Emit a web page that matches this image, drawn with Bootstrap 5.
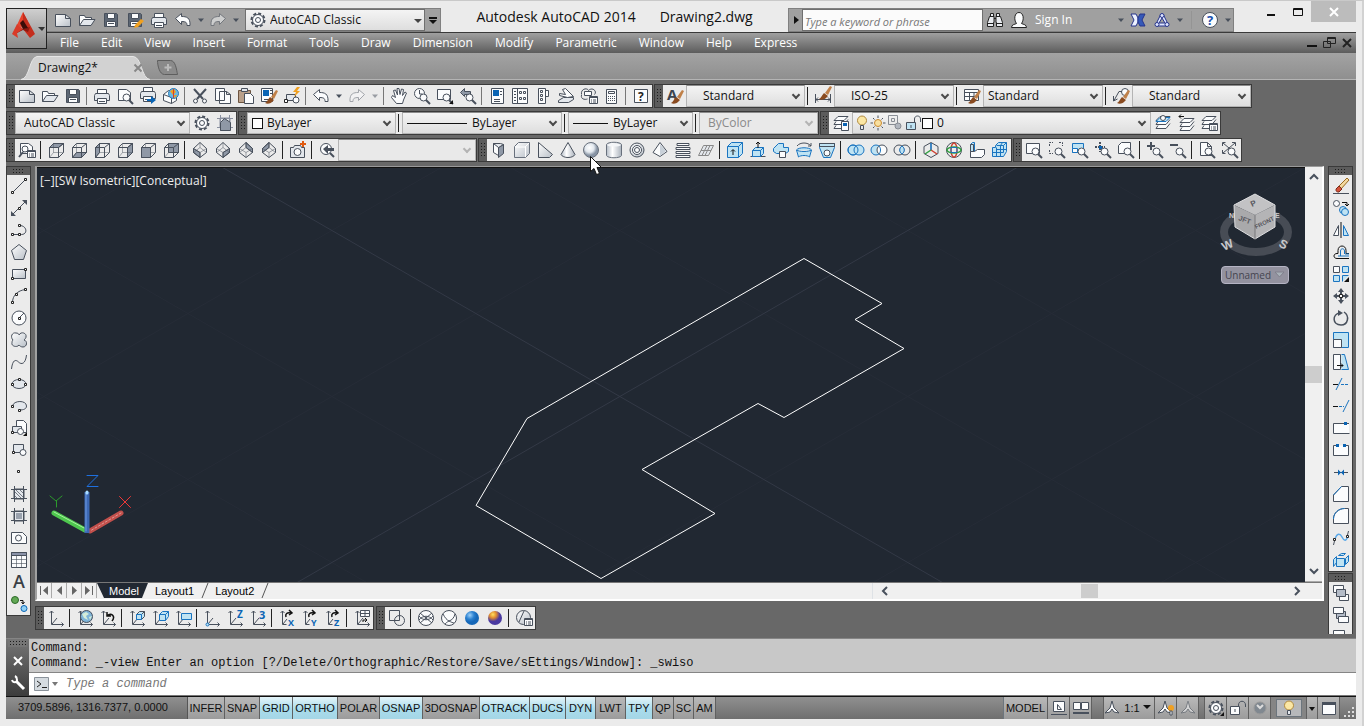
<!DOCTYPE html>
<html lang="en">
<head>
<meta charset="utf-8">
<meta name="viewport" content="width=device-width, initial-scale=1">
<title>Autodesk AutoCAD 2014 - Drawing2.dwg</title>
<link href="https://cdn.jsdelivr.net/npm/bootstrap@5.3.0/dist/css/bootstrap.min.css" rel="stylesheet">
<style>
body{font:12px/16px "Open Sans","Noto Sans",sans-serif;color:#111;background:#ebebeb}
.app{min-height:100vh;border-top:1px solid #c9c9c9;border-bottom:1px solid #c9c9c9;border-right:2px solid #d2d2d2;padding:0 6px 7px 6px}
svg{overflow:visible;display:block;flex:none}
button{font:inherit}
svg.i,.tool svg,.flat svg{width:16px;height:16px;fill:none;stroke:#48505c;stroke-width:1}
.w{fill:#fbfcfd}.l{fill:#e3e7ec}.g{fill:#8f98a6}.c{fill:#bfe3f3}.d{fill:#48505c;stroke:none}.k{fill:#111;stroke:none}.u{fill:#0a64b4;stroke:none}
.b{stroke:#1a74c0}.t{stroke-width:2}.br{fill:#8a4b20;stroke:none}.or{fill:#f0a020;stroke:none}
.n{fill:#fff;stroke:#222}
.da{stroke-dasharray:3 1}

/* title and menu */
.top{position:relative}
.appbtn{position:absolute;left:0;top:7px;width:41px;height:41px;border:1px solid #222;border-radius:0;background:linear-gradient(#cfcfcf,#8a8a8a);padding:0;z-index:2}
.titlebar{height:31px;padding-left:40px;padding-top:7px}
.flat{border:0;background:none;padding:0;border-radius:0;width:24px;height:22px;display:flex;align-items:center;justify-content:center}
.flat.nar{width:11px}
.qat,.info{background:#a0a0a0;border:1px solid #808080;height:24px}
.combo{display:flex;align-items:center;background:linear-gradient(#f4f4f4,#dedede);border:1px solid #b4b4b4;border-top-color:#8c8c8c;position:relative;height:22px}
.combo select{appearance:none;border:0;background:none;width:100%;height:100%;padding:0 18px 0 8px;color:#111;outline:0}
.combo::after{content:"";position:absolute;right:5px;top:6px;width:6px;height:6px;border:solid #4a4a4a;border-width:0 2px 2px 0;transform:rotate(45deg);pointer-events:none}
.combo.off::after{border-color:#b4b4b4}.combo.off,.combo.off select{color:#8a8a8a;background:#e9e9e9;opacity:1}
.combo.tri{border-color:#707070}.combo.tri::after{width:0;height:0;border:4px solid transparent;border-top-color:#444;transform:none;top:9px;right:2px}
.wtitle{font-size:14px;line-height:18px;color:#111}
.info input{width:181px;height:22px;border:1px solid #6f6f6f;border-radius:0;font-size:11px;font-style:italic;padding:2px 2px 0;background:#fbfbfb}
.info input::placeholder,.cmdin input::placeholder{color:#777;opacity:1}
.close{width:45px;height:21px;background:#bcbcbc;border:0;padding:0}
.menubar{height:21px;background:linear-gradient(#3a3a3a 0 1px,#a0a0a0 1px,#5c5c5c);padding-left:43px}
.menubar a{color:#fff;text-decoration:none;padding:0 11px;line-height:21px}
.doctabs{height:27px;background:linear-gradient(#a3a3a3,#8f8f8f);border-bottom:1px solid #b4b4b4;padding-left:15px}
.dtab{position:relative;width:130px;padding:7px 7px 0 17px}
.dtab>*{position:relative}
.dtab>svg.bgs{position:absolute;left:0;top:3px;width:148px;height:23px}

/* toolbars */
.work{background:#686868;padding:4px 3px 4px 0;flex:1}
.tbar{display:flex;background:#ebebeb;border:1px solid #3a3a3a;height:24px;align-items:center}
.grip{width:8px;align-self:stretch;flex:none;background:radial-gradient(circle,#1c1c1c 1px,transparent 1px) 0 0/3px 3px #5c5c5c;border:solid #5c5c5c;border-width:3px 1px}
.tool{width:23px;height:22px;padding:0;border:0;border-radius:0;display:flex;align-items:center;justify-content:center;flex:none;position:relative}
.tool.nar{width:13px}
.sep{width:6px;flex:none;align-self:stretch;background:linear-gradient(#222,#222) 2px 50%/1px 18px no-repeat}
.grey{background-image:linear-gradient(#777,#777)}
.vert{flex-direction:column;height:auto;width:25px}
.vert .grip{width:auto;height:8px;border-width:1px 5px}
.swatch{width:11px;height:11px;border:1px solid #111;background:#fff;flex:none}
.pointer{position:absolute;left:11px;top:17px;z-index:5}

/* drawing area */
.view{border:1px solid #9a9a9a;border-left:2px solid #a0a0a0;border-right:2px solid #fff;border-bottom:2px solid #fff;background:#f0f0f0}
.canvas{background:#212832;position:relative;overflow:hidden;min-height:200px;border-top:1px solid #111}
.plan{position:absolute;width:100%;height:100%}
.vlabel{position:absolute;left:3px;top:5px;color:#eee;z-index:1}
.cubebox{position:absolute;right:11px;top:22px}
.ucsbox{position:absolute;left:8px;bottom:46px}
.wcs{position:absolute;right:16px;top:98px;width:68px;height:18px;border:1px solid #b5b4c4;border-radius:4px;background:#93929f;color:#44444f;padding:0 4px 0 3px;font-size:10px;line-height:15px}
.vs{width:17px;padding:3px 0;border-bottom:1px solid #aaa}
.thumb{background:#cdcdcd;width:17px;height:17px}
.mtabs{font:11px/14px "Liberation Sans",sans-serif;height:17px;border-top:1px solid #777}
.mtabs button{border:0;background:none;padding:0;height:15px}
.mtabs .nv{width:15px;border-right:1px solid #aaa;display:flex;align-items:center;justify-content:center}
.mtabs .lt{padding:1px 8px 0 7px}
.mtabs .cut{width:6px;height:15px;stroke:#555;fill:none}
.mtabs .on{background:#212832;color:#fff;clip-path:polygon(0 0,100% 0,calc(100% - 6px) 100%,7px 100%);padding:1px 9px 0 12px}

/* command line and status */
.cmd{border-top:1px solid #858585;font:12px/15px "Liberation Mono",monospace;background:#c8c8c8}
.cmdside{width:23px;background:linear-gradient(#757575,#3c3c3c)}
.cmdlog{padding:2px 2px 0;height:34px;border-bottom:1px solid #858585}
.cmdin{height:23px;background:#fff;border-bottom:1px solid #777;padding-left:5px}
.cmdin input{border:0;outline:0;flex:1;font:italic 12px/15px "Liberation Mono",monospace;padding:0 4px}
.status{height:23px;background:linear-gradient(#909090,#6f6f6f);border-top:1px solid #111;font:11px/21px "Liberation Sans",sans-serif}
.status button{border:0;border-right:1px solid #606060;background:linear-gradient(#b9b9b9,#9b9b9b);padding:0 2px;height:22px;color:#111;display:flex;align-items:center;justify-content:center}
.status button.act{background:linear-gradient(#e4f4f9,#a9dcec 55%,#a4d6e6)}
.coords{width:182px;padding-left:12px;border-right:1px solid #555}
.gap{width:12px;border-right:1px solid #606060}
</style>
</head>
<body>
<svg width="0" height="0" class="position-absolute" aria-hidden="true">
<defs>
<linearGradient id="gr" x1="0" y1="0" x2="1" y2="1"><stop stop-color="#fff"/><stop offset="1" stop-color="#b9c0c8"/></linearGradient>
<linearGradient id="cy"><stop stop-color="#b4bcc6"/><stop offset=".4" stop-color="#fff"/><stop offset="1" stop-color="#aab2bc"/></linearGradient>
<radialGradient id="sp" cx=".4" cy=".35"><stop stop-color="#fff"/><stop offset=".6" stop-color="#e2e8ee"/><stop offset="1" stop-color="#8894a4"/></radialGradient>
<radialGradient id="bl" cx=".35" cy=".3"><stop stop-color="#9cd0f8"/><stop offset=".6" stop-color="#2a80d0"/><stop offset="1" stop-color="#1668b8"/></radialGradient>
<radialGradient id="re" cx=".35" cy=".25"><stop stop-color="#ffe060"/><stop offset=".5" stop-color="#e08a30"/><stop offset="1" stop-color="#4a3aa0"/></radialGradient>
<g id="sheet"><path fill="url(#gr)" d="M.5 2.500h10l5 4v8h-15z"/><path d="M10.500 2.500v4h5"/></g>
<g id="open"><path class="w" d="M.5 13.500v-10h5l1 2h6v2"/><path class="l" d="M.5 13.500l4-6h11.500l-4 6z"/></g>
<g id="save"><path fill="#5d6774" d="M1.500 1.500h12l1 1v12h-13z"/><path class="w" d="M4.500 1.500h7v5h-7zM3.500 9.500h9v5h-9z"/><path d="M5 11.500h6"/></g>
<g id="print"><path class="w" d="M3.500 5.500v-4h9v4"/><path class="l" d="M1.500 5.500h13l1 2v5h-15v-5z"/><path class="w" d="M3.500 10.500h9v5h-9z"/><path d="M5 13.500h6"/></g>
<path id="undo" class="w" d="M.5 6.500l6-5v3c5 0 9 1 8.500 9h-3c0-3-1-4-5.500-4v3z"/>
<g id="mag"><circle class="w" cx="9.500" cy="9.500" r="3.500"/><path class="t" d="M12 12l4 4"/></g>
<g id="wire"><path d="M1.500 5.500h9v10h-9zM1.500 5.500l4-4h10l-5 4M15.500 1.500v9l-5 5"/><path opacity=".45" d="M5.500 1.500v9h10M5.500 10.500l-4 5"/></g>
<g id="axes"><path d="M3.500 1v13.500h12M4 14l5-6"/><path d="M1.500 3l2-2 2 2M13.500 12.500l2 2-2 2"/></g>
<g id="dia"><path d="M8 .5l6.500 6v4l-6.500 5-6.500-5v-4z"/><path opacity=".5" d="M1.500 6.500l6.500 4 6.500-4M8 10.500v5M8 .5v5l-6.500 5M8 5.500l6.500 5"/></g>
<g id="sun"><circle fill="#f8e0a0" stroke="#c88a30" cx="8" cy="8" r="3.500"/><path d="M8 .500v2.500M8 13v2.500M.500 8h2.500M13 8h2.500M3 3l1.500 1.500M11.500 11.500l1.500 1.500M3 13l1.500-1.500M11.500 4.500l1.500-1.500"/></g>
<g id="bulb"><circle fill="#fbe7a4" stroke="#b08a40" cx="8" cy="5.500" r="4.500"/><path class="l" d="M6.500 10.500h3v4h-3z"/></g>
<g id="gear"><circle cx="8" cy="8" r="6.500" stroke-width="2" stroke-dasharray="3 2"/><circle class="w" cx="8" cy="8" r="5.500"/><circle cx="8" cy="8" r="2.500"/></g>
<path id="layers" class="w" d="M5 1.500h10l-4 4h-10zM3 6.500l-2 3h10l4-5M3 10.500l-2 3h10l4-5"/>
<g id="list"><path class="w" d="M8.500 8.500h8v7h-8z"/><path d="M8.500 9.500h8M10 12h1M12 12h3M10 14h1M12 14h3"/></g>
<g id="brush"><path fill="#c08048" stroke="none" d="M10 9l5-7 2 1-4 8z"/><path class="br" d="M9 9l4 3-2 2c-2 2-5 2-7 1 2-1 3-4 5-6z"/></g>
<path id="dn" class="d" d="M5 6.500h6l-3 3.500z"/>
<g id="hatch"><path class="l" d="M3 3h10v10h-10z"/><path d="M3.500 0v16M12.500 0v16M0 3.500h16M0 12.500h16"/></g>
<path id="turn" stroke="#111" stroke-width="1.500" d="M7 7c-1-3 1-5 5-4M10 0l3 3-3 2"/>
</defs></svg>

<div class="app d-flex flex-column">
<header class="top">
<button class="appbtn" aria-label="Application menu"><svg width="39" height="39"><path fill="#e8432c" d="M16 3l5 10-5 6-6-3z"/><path fill="#c42d1d" d="M16 3l12 22-5 4-7-9z"/><path fill="#8c1a12" d="M9 17l7 3 7-2-2 5-5-2-6 3z"/><path fill="#d93a28" d="M10 15l6 5-6 4 1 5-6-4z"/><path fill="#3a0c08" d="M13 14l3-3 5 8-5 1z"/><path fill="#333" d="M31 18h7l-3 4z"/></svg></button>
<div class="titlebar d-flex align-items-start">
  <div class="qat d-flex ps-1">
    <button class="flat" aria-label="New"><svg><use href="#sheet"/></svg></button><button class="flat" aria-label="Open"><svg><use href="#open"/></svg></button><button class="flat" aria-label="Save"><svg><use href="#save"/></svg></button><button class="flat" aria-label="Save as"><svg><use href="#save"/><path class="or" d="M8 13l6-6 3 2-6 6-4 1z"/></svg></button><button class="flat" aria-label="Plot"><svg><use href="#print"/></svg></button><button class="flat" aria-label="Undo"><svg><use href="#undo"/></svg></button><button class="flat nar" aria-label="Undo list"><svg><use href="#dn"/></svg></button><button class="flat" aria-label="Redo"><svg opacity=".5"><use href="#undo" transform="matrix(-1 0 0 1 16 0)"/></svg></button><button class="flat nar" aria-label="Redo list"><svg><use href="#dn"/></svg></button>
    <div class="combo tri ps-1 ms-1" style="width:180px"><svg class="i"><use href="#gear"/></svg><select class="ps-1" aria-label="Workspace"><option>AutoCAD Classic</option></select></div>
    <button class="flat" style="width:15px" aria-label="Customize"><svg><path class="k" d="M4 5h8v2h-8zM4 8h8l-4 4z"/></svg></button>
  </div>
  <div class="wtitle flex-fill d-flex justify-content-center gap-4"><span>Autodesk AutoCAD 2014</span><span>Drawing2.dwg</span></div>
  <div class="info d-flex">
    <button class="flat" style="width:13px" aria-label="Collapse search"><svg><path class="k" d="M6 4l5 4-5 4z"/></svg></button>
    <input type="text" placeholder="Type a keyword or phrase" aria-label="Search help">
    <button class="flat" aria-label="Search"><svg><path fill="#e8ebef" stroke="#222" d="M3.500 1.500h3v3h-3zM9.500 1.500h3v3h-3zM2.500 4.500h4.500v6h-.5v4h-6v-4zM9 4.500h4.500l2 6v4h-6v-4h-.5zM.5 11.500h6M9.500 11.500h6M7 6.500h2"/></svg></button>
    <button class="flat" aria-label="User"><svg><path class="w" stroke="#222" d="M.5 15.500c0-3 3-3 5-4-3-4-2-11 2.500-11s5.500 7 2.500 11c2 1 5 1 5 4z"/></svg></button>
    <button class="flat text-white justify-content-start ps-1" style="width:84px">Sign In</button>
    <button class="flat nar" aria-label="Sign in menu"><svg><use href="#dn"/></svg></button>
    <button class="flat" aria-label="Exchange"><svg><path fill="#eef2ff" stroke="#26348c" d="M1 2h5l2 4v4l-2 4h-5l3-6z"/><path fill="#3559b8" stroke="#26348c" d="M15 2h-5l-2 4v4l2 4h5l-3-6z"/></svg></button>
    <button class="flat" aria-label="Autodesk 360"><svg stroke-linejoin="round"><g fill="#dfe6ff" stroke="#26348c"><path d="M7 2l-5 10 1 2h10l1-2-5-10z"/><path fill="#a0a0a0" d="M8 6l-3 5h6z"/><circle cx="8" cy="3.500" r="2"/><circle cx="3" cy="12.500" r="2"/><circle cx="13" cy="12.500" r="2"/></g></svg></button>
    <button class="flat nar" aria-label="360 menu"><svg><use href="#dn"/></svg></button>
    <span class="sep grey mx-1" style="width:5px;opacity:.3"></span>
    <button class="flat" aria-label="Help"><svg><circle class="w" cx="8" cy="8" r="7.500"/><text x="5" y="13" font-size="13" font-weight="700" fill="#1a4fae" stroke="none">?</text></svg></button>
    <button class="flat nar" aria-label="Help menu"><svg><use href="#dn"/></svg></button>
  </div>
  <div class="d-flex ms-4" style="margin-top:-7px">
    <button class="flat" style="width:26px" aria-label="Minimize"><svg><path class="k" d="M4 10h8v2h-8z"/></svg></button>
    <button class="flat" style="width:27px" aria-label="Maximize"><svg><path stroke="#111" d="M3.500 4.500h9v7h-9zM3.500 5.500h9"/></svg></button>
    <button class="close d-flex align-items-center justify-content-center" aria-label="Close"><svg width="8" height="8"><path stroke="#fff" stroke-width="2" d="M0 0l8 8M8 0l-8 8"/></svg></button>
  </div>
</div>
<nav class="menubar d-flex"><a href="#">File</a><a href="#">Edit</a><a href="#">View</a><a href="#">Insert</a><a href="#">Format</a><a href="#">Tools</a><a href="#">Draw</a><a href="#">Dimension</a><a href="#">Modify</a><a href="#">Parametric</a><a href="#">Window</a><a href="#">Help</a><a href="#">Express</a>
  <div class="ms-auto d-flex"><button class="flat" style="width:16px" aria-label="Minimize drawing"><svg><path class="k" d="M3 10h10v2h-10z"/></svg></button><button class="flat" style="width:18px" aria-label="Restore drawing"><svg><path stroke="#222" d="M6.500 2.500h8v6h-8zM2.500 6.500h7v6h-7zM6 3.500h9"/></svg></button><button class="flat" style="width:18px" aria-label="Close drawing"><svg><path stroke="#222" stroke-width="2" d="M4 4l8 8M12 4l-8 8"/></svg></button></div>
</nav>
<div class="doctabs d-flex">
  <div class="dtab d-flex justify-content-between"><svg class="bgs"><path fill="#d2d2d2" stroke="#e6e6e6" d="M0 23.500c9-1 8-22 16-23h96c9 0 8 22 17 23z"/></svg><span>Drawing2*</span><button class="flat" style="width:12px;height:16px" aria-label="Close tab"><svg><path stroke="#888" stroke-width="2" d="M4.500 4.500l7 7M11.500 4.500l-7 7"/></svg></button></div>
  <button class="flat ms-1" style="height:28px" aria-label="New tab"><svg style="width:22px"><path fill="#8a8a8a" stroke="#5e5e5e" d="M1.500 1.500h13c5 0 6 9 7 14h-13c-5 0-7-9-7-14z"/><path stroke="#bbb" stroke-width="2" d="M12 5v7M8.500 8.500h7"/></svg></button>
</div>
</header>

<main class="work d-flex flex-column">
<div class="d-flex flex-column" style="gap:3px">
<!-- standard and styles toolbars -->
<div class="d-flex" style="gap:1px">
<div class="tbar" role="toolbar" aria-label="Standard"><span class="grip"></span>
<button class="btn tool" aria-label="New"><svg><use href="#sheet"/></svg></button><button class="btn tool" aria-label="Open"><svg><use href="#open"/></svg></button><button class="btn tool" aria-label="Save"><svg><use href="#save"/></svg></button><span class="sep grey"></span>
<button class="btn tool" aria-label="Plot"><svg><use href="#print"/></svg></button><button class="btn tool" aria-label="Preview"><svg><path class="w" d="M1.500 1.500h8l4 3v8h-12z"/><use href="#mag"/></svg></button><button class="btn tool" aria-label="Publish"><svg><g transform="translate(0 -2)"><use href="#print"/></g><path class="u" d="M7 11h4v-3l5 4-5 4v-3h-4z"/></svg></button><button class="btn tool" aria-label="3D print"><svg><path class="w" d="M.5 6.500l5-4 8 3v7l-5 3-8-3zM.5 6.500l8 3v6"/><circle fill="#6ab8e4" stroke="#2a7ab4" cx="10.500" cy="5.500" r="5"/><path class="or" d="M7 3l4-2 2 3-3 3zM11 7l3 0-2 3z"/><path stroke="#d04030" d="M10.500 1v9"/></svg></button><span class="sep grey"></span>
<button class="btn tool" aria-label="Cut"><svg><path stroke-width="2" d="M2 1l9 10M14 1l-9 10"/><circle class="w" cx="3.500" cy="13" r="2"/><circle class="w" cx="12.500" cy="13" r="2"/></svg></button><button class="btn tool" aria-label="Copy"><svg><path class="w" d="M.5.5h9v12h-9zM4.500 3.500h7l4 3v9h-11zM11.500 3.500v3h4"/></svg></button><button class="btn tool" aria-label="Paste"><svg><path fill="#b9a08a" stroke="#6d5440" d="M.5 2.500h12v12h-12z"/><path class="l" d="M3.500.5h6v3h-6z"/><path class="w" d="M6.500 5.500h6l3 3v7h-9z"/></svg></button><button class="btn tool" aria-label="Match properties"><svg><path class="w" d="M.5.5h11v13h-11z"/><path class="u" d="M2 2h6v6h-6z"/><path d="M3 11.500h5M9 2.500h2M9 5.500h2"/><use href="#brush"/></svg></button><button class="btn tool" aria-label="Block editor"><svg><path class="l" d="M2.500 6.500h9v6h-9z"/><circle class="w" cx="12" cy="12" r="3"/><path class="n" d="M.5 11.500h3v3h-3z"/><path class="or" d="M13 -1l-4 5h3l-2 5 6-6h-3l3-4z"/></svg></button><span class="sep grey"></span>
<button class="btn tool" aria-label="Undo"><svg><use href="#undo"/></svg></button><button class="btn tool nar" aria-label="Undo list"><svg><use href="#dn"/></svg></button><button class="btn tool" aria-label="Redo"><svg opacity=".45"><use href="#undo" transform="matrix(-1 0 0 1 16 0)"/></svg></button><button class="btn tool nar" aria-label="Redo list"><svg opacity=".5"><use href="#dn"/></svg></button><span class="sep grey"></span>
<button class="btn tool" aria-label="Pan"><svg><path class="w" d="M5.500 15.500l-5-6 1-2 3 2-2-7 2-.500 2 5-.500-6.500h2l1 6 1.500-5.500 2 .5-1 6 2.500-3.500 1.500 1-3 7-1 3.500z"/></svg></button><button class="btn tool" aria-label="Zoom realtime"><svg><circle class="w" cx="5.500" cy="5.500" r="5"/><path d="M5.500 2v4h3"/><use href="#mag"/></svg></button><button class="btn tool" aria-label="Zoom window"><svg><path class="w" d="M.5 1.500h13v10h-13z"/><use href="#mag"/><path class="k" d="M16 12v4h-4z"/></svg></button><button class="btn tool" aria-label="Zoom previous"><svg><path class="g" d="M.5 4.500l4-4v3h6v3h-6v2z"/><use href="#mag"/></svg></button><span class="sep grey"></span>
<button class="btn tool" aria-label="Properties"><svg><path class="w" d="M2.500.5h12v15h-12z"/><path class="u" d="M4 2h6v6h-6z"/><path d="M11 3.500h2M11 6.500h2M5 11.500h6M5 13.500h6"/></svg></button><button class="btn tool" aria-label="DesignCenter"><svg><path class="w" d="M.5.5h15v15h-15zM5.500.5v15M7.500 3.500h2v2h-2zM11.500 3.500h2v2h-2zM7.500 9.500h2v2h-2zM11.500 9.500h2v2h-2z"/><path d="M2 3.500h2M2 6.500h2M2 9.500h2M2 12.500h2"/></svg></button><button class="btn tool" aria-label="Tool palettes"><svg><path class="w" d="M3.500.5h7v15h-7zM10.500 2.500h3v6h-3zM5.500 2.500h2v2h-2zM5.500 6.500h2v2h-2zM5.500 10.500h2v2h-2z"/></svg></button><button class="btn tool" aria-label="Sheet sets"><svg><path class="l" d="M.5 12.500l5-3h10v2l-5 3h-10z"/><path class="w" d="M4.500 1.500l3-1 8 8-6 1-8-2v-2l6 1z"/></svg></button><button class="btn tool" aria-label="Markup"><svg><path d="M.5 6.500c-1-6 6-7 7-4 4-4 9 1 6 4M.5 7c-1 4 3 5 6 4"/><path class="w" d="M3.500 3.500h7v4h-7z"/><use href="#list"/></svg></button><button class="btn tool" aria-label="Calculator"><svg><path class="w" d="M2.500 1.500h10v14h-10zM4.500 3.500h6v2h-6z"/><path stroke-dasharray="1 1" d="M4 8.500h8M4 10.500h8M4 12.500h8"/></svg></button><span class="sep grey"></span>
<button class="btn tool" aria-label="Help"><svg><path class="w" d="M1.500 1.500h13v13h-13z"/><text x="5" y="13" font-size="12" font-weight="700" fill="#222" stroke="none">?</text></svg></button></div>
<div class="tbar" role="toolbar" aria-label="Styles"><span class="grip"></span>
<button class="btn tool" aria-label="Text style"><svg><text x="0" y="12" font-size="15" font-weight="700" fill="#3d454f" stroke="none">A</text><use href="#brush"/></svg></button><div class="combo ps-2" style="width:119px"><select aria-label="Text style"><option>Standard</option></select></div><span class="sep"></span>
<button class="btn tool" aria-label="Dimension style"><svg><path d="M.5 6v9M15.500 6v9M1 11.500h14M3 9.500l-2 2 2 2M13 9.500l2 2-2 2"/><g transform="translate(0 -4)"><use href="#brush"/></g></svg></button><div class="combo ps-2" style="width:120px"><select aria-label="Dimension style"><option>ISO-25</option></select></div><span class="sep"></span>
<button class="btn tool" aria-label="Table style"><svg><path class="w" d="M.5 1.500h14v11h-14zM.5 4.500h14M.5 8.500h14M5.500 4.500v8M10 4.500v8"/><use href="#brush"/></svg></button><div class="combo" style="width:120px"><select style="padding-left:4px" aria-label="Table style"><option>Standard</option></select></div><span class="sep"></span>
<button class="btn tool" aria-label="Multileader style"><svg><circle class="w" cx="12" cy="4" r="3.500"/><path d="M9 3.500h-3l-5 9M.5 8v5l4-2"/><use href="#brush"/></svg></button><div class="combo ps-2" style="width:119px"><select aria-label="Multileader style"><option>Standard</option></select></div></div>
</div>

<!-- workspaces, properties, layers -->
<div class="d-flex" style="gap:1px">
<div class="tbar" role="toolbar" aria-label="Workspaces"><span class="grip"></span><div class="combo" style="width:175px"><select aria-label="Workspace"><option>AutoCAD Classic</option></select></div>
<button class="btn tool" aria-label="Workspace settings"><svg><use href="#gear"/></svg></button><button class="btn tool" aria-label="My workspace"><svg><g stroke="#8a90a0"><use href="#hatch"/></g><path class="g" d="M3.500 15.500v-8l4-4 6 4v8z"/></svg></button></div>
<div class="tbar" role="toolbar" aria-label="Properties"><span class="grip"></span>
<div class="combo" style="width:149px;padding-left:4px"><span class="swatch"></span><select style="padding-left:4px" aria-label="Color"><option>ByLayer</option></select></div><span class="sep"></span>
<div class="combo" style="width:160px;padding-left:4px"><svg class="i" style="width:60px;stroke:#111"><path d="M0 8.500h60"/></svg><select style="padding-left:5px" aria-label="Linetype"><option>ByLayer</option></select></div><span class="sep"></span>
<div class="combo" style="width:125px;padding-left:4px"><svg class="i" style="width:35px;stroke:#111"><path d="M0 8.500h35"/></svg><select style="padding-left:5px" aria-label="Lineweight"><option>ByLayer</option></select></div><span class="sep"></span>
<div class="combo off" style="width:119px"><select aria-label="Plot style" disabled><option>ByColor</option></select></div></div>
<div class="tbar" role="toolbar" aria-label="Layers"><span class="grip"></span><button class="btn tool" aria-label="Layer properties"><svg><use href="#layers"/><path class="w" d="M8.500 6.500h7v9h-7z"/><path class="u" d="M10 8h4v3h-4z"/></svg></button>
<div class="combo" style="width:299px;padding-left:1px"><svg class="i"><use href="#bulb"/></svg><svg class="i"><use href="#sun"/></svg><svg class="i" opacity=".6"><path d="M2.500.5h9v9h-9zM5.500 3.500h3v3h-3z"/><circle class="g" cx="12" cy="11" r="3"/></svg><svg class="i ms-1"><path class="c" d="M.5 7.500h9v7h-9z"/><path d="M8.500 7v-3c0-4 6-4 6 0v3M5 10v3"/></svg><span class="swatch"></span><select style="padding-left:4px" aria-label="Layer"><option>0</option></select></div>
<button class="btn tool" aria-label="Make current"><svg><use href="#layers"/><path class="c b" d="M5 2.500h10l-4 4h-10z"/><circle class="w" cx="8" cy="3" r="2.500"/></svg></button><button class="btn tool" aria-label="Layer previous"><svg><g transform="translate(1 2)"><use href="#layers"/></g><path stroke="#111" d="M6 1.500h-5M3 -.5l-2 2 2 2"/></svg></button><button class="btn tool" aria-label="Layer states"><svg><use href="#layers"/><use href="#list"/></svg></button></div>
</div>

<!-- view, modeling and zoom -->
<div class="d-flex" style="gap:1px">
<div class="tbar" role="toolbar" aria-label="View"><span class="grip"></span>
<button class="btn tool" aria-label="Named views"><svg><path class="w" d="M1.500 1.500h8l4 3v7h-12z"/><circle class="w" cx="6" cy="7" r="3"/><path class="t" d="M0 15l4-5"/><use href="#list"/></svg></button><span class="sep"></span>
<button class="btn tool" aria-label="Top"><svg><path class="g" d="M1.500 5.500l4-4h10l-5 4z"/><use href="#wire"/></svg></button><button class="btn tool" aria-label="Bottom"><svg><path class="g" d="M1.500 15.500l4-5h10l-5 5z"/><use href="#wire"/></svg></button><button class="btn tool" aria-label="Left"><svg><path class="g" d="M1.500 5.500l4-4v9l-4 5z"/><use href="#wire"/></svg></button><button class="btn tool" aria-label="Right"><svg><path class="g" d="M10.500 5.500l5-4v9l-5 5z"/><use href="#wire"/></svg></button><button class="btn tool" aria-label="Front"><svg><use href="#wire"/><path class="g" d="M1.500 5.500h9v10h-9z"/></svg></button><button class="btn tool" aria-label="Back"><svg><path class="g" d="M5.500 1.500h10v9h-10z"/><use href="#wire"/></svg></button><span class="sep"></span>
<button class="btn tool" aria-label="SW isometric"><svg><path class="g" d="M1.500 6.500l6.500 4v5l-6.500-5z"/><use href="#dia"/></svg></button><button class="btn tool" aria-label="SE isometric"><svg><path class="g" d="M14.500 6.500l-6.500 4v5l6.500-5z"/><use href="#dia"/></svg></button><button class="btn tool" aria-label="NE isometric"><svg><path class="g" d="M8 .5l6.500 6v4l-6.500-5z"/><use href="#dia"/></svg></button><button class="btn tool" aria-label="NW isometric"><svg><path class="g" d="M8 .5l-6.500 6v4l6.500-5z"/><use href="#dia"/></svg></button><span class="sep"></span>
<button class="btn tool" aria-label="Create camera"><svg><path class="l" d="M.5 5.500h3l1-2h6l1 2h3v10h-14z"/><circle class="w" cx="7.500" cy="10" r="3.500"/><path stroke="#e05a10" stroke-width="2" d="M13 -1v6M10 2h6"/></svg></button><span class="sep"></span>
<button class="btn tool" aria-label="Previous view"><svg><circle class="w" cx="7" cy="7" r="5.500"/><path class="t" d="M11 11l4 4"/><path class="d" d="M4 7l5-4v3h6v3h-6v3z"/></svg></button>
<div class="combo off" style="width:138px"><select disabled aria-label="View"><option></option></select></div></div>
<div class="tbar" role="toolbar" aria-label="Modeling"><span class="grip"></span>
<button class="btn tool" aria-label="Polysolid"><svg><path class="w" d="M2.500 1.500l5 2v10l-5-3z"/><path class="g" d="M7.500 5.500l5-3v9l-5 4z"/><path class="l" d="M2.500 1.500h7l3 1-5 3z"/></svg></button><button class="btn tool" aria-label="Box"><svg><path fill="url(#gr)" stroke="#68707c" d="M.5 4.500l4-4h11v11l-4 4h-11z"/><path stroke="#fff" d="M1 5h10l4-4M11.500 5v10"/></svg></button><button class="btn tool" aria-label="Wedge"><svg><path fill="url(#gr)" d="M1.500.5l14 12-3 3h-11z"/></svg></button><button class="btn tool" aria-label="Cone"><svg><path fill="url(#cy)" d="M8 .5l7 12c-2 4-12 4-14 0z"/></svg></button><button class="btn tool" aria-label="Sphere"><svg><circle fill="url(#sp)" stroke="#68707c" cx="8" cy="8" r="7.500"/></svg><svg class="pointer" style="width:12px;height:20px" aria-hidden="true"><path fill="#fff" stroke="#111" d="M.5.5v15l3.500-3 2.500 6 3-1-2.500-6h4.500z"/></svg></button><button class="btn tool" aria-label="Cylinder"><svg><path fill="url(#cy)" stroke="#68707c" d="M.5 2.500c1-3 14-3 15 0v11c-1 3-14 3-15 0z"/><path fill="#f4f6f8" stroke="none" d="M1 3c1-2 13-2 14 0-1 2-13 2-14 0z"/></svg></button><button class="btn tool" aria-label="Torus"><svg><circle fill="url(#gr)" cx="8" cy="8" r="7"/><circle class="w" cx="8" cy="8" r="4.500"/><circle cx="8" cy="8" r="2.500"/></svg></button><button class="btn tool" aria-label="Pyramid"><svg><path class="w" d="M8 .5l7 9-7 5-7-4z"/><path fill="#c8d0d8" stroke="none" d="M8 2l6 7-6 5z"/></svg></button><button class="btn tool" aria-label="Helix"><svg><path class="w" d="M2 1.500h12v2h-12zM1 5.500h14v2h-14zM1 9.500h14v2h-14zM1 13.500h14v2h-14z"/></svg></button><button class="btn tool" aria-label="Planar surface"><svg><path class="l" stroke="#888" d="M.5 13.500l5-10h10l-5 10zM3 8.500h10M9 3.500l-5 10M12 3.500l-5 10"/></svg></button><span class="sep"></span>
<button class="btn tool" aria-label="Presspull"><svg><path class="c b" d="M.5 4.500l4-4h11v11l-4 4h-11zM.5 4.500h11v11M11.500 4.500l4-4"/><path stroke="#111" d="M6 13v-5M4 9.500l2-2 2 2"/></svg></button><button class="btn tool" aria-label="Extrude"><svg><path d="M.5 14.500h15"/><path class="c b" d="M2.500 14.500v-6l3-3h8v6l-3 3zM2.500 8.500h8v6M10.500 8.500l3-3"/><path stroke="#111" d="M8 6v-6M6 2l2-2 2 2"/></svg></button><button class="btn tool" aria-label="Sweep"><svg><path class="c b" d="M.5 6.500l5-5h5v4h5v4l-3 2h-9l-3-2z"/><path class="w" d="M6.500 9.500h6v6h-6z"/></svg></button><button class="btn tool" aria-label="Revolve"><svg><path d="M1 4c3-4 11-4 14 0M12 4h3v-3"/><path class="c b" d="M.5 8c2-3 13-3 15 0l-2 7c-2-2-9-2-11 0zM.5 8c3 2 12 2 15 0"/></svg></button><button class="btn tool" aria-label="Loft"><svg><path class="c b" d="M.5 1.500h15v4l-4 10h-7l-4-10z"/><circle class="w" cx="8" cy="11" r="3"/><path d="M.5 1.500h15v3h-15z"/></svg></button><span class="sep"></span>
<button class="btn tool" aria-label="Union"><svg><g class="c b"><circle cx="5" cy="8" r="5"/><circle cx="11" cy="8" r="5"/></g><circle class="b" cx="5" cy="8" r="5"/></svg></button><button class="btn tool" aria-label="Subtract"><svg><circle class="c b" cx="5" cy="8" r="5"/><circle class="w" cx="11" cy="8" r="5"/><path class="b" d="M8 4c2 2 2 6 0 8"/></svg></button><button class="btn tool" aria-label="Intersect"><svg><circle cx="5" cy="8" r="5"/><circle cx="11" cy="8" r="5"/><path class="c b" d="M8 4c-3 2-3 6 0 8c3-2 3-6 0-8z"/></svg></button><span class="sep"></span>
<button class="btn tool" aria-label="3D move"><svg><path d="M8 .5l7 4v7l-7 4-7-4v-7z"/><path stroke="#0a64b4" stroke-width="1.500" d="M8 8v-7"/><path stroke="#d04030" stroke-width="1.500" d="M8 8l6 4"/><path stroke="#30a040" stroke-width="1.500" d="M8 8l-6 4"/></svg></button><button class="btn tool" aria-label="3D rotate"><svg><circle cx="8" cy="8" r="7.500"/><ellipse stroke="#d04030" stroke-width="1.500" cx="8" cy="8" rx="3" ry="7"/><ellipse stroke="#30a040" stroke-width="1.500" cx="8" cy="8" rx="7" ry="3"/><path class="b" d="M5 5.500h6v5h-6z"/></svg></button><button class="btn tool" aria-label="3D align"><svg><path class="c b" d="M1.500 2.500l2-2h2v9h-4z"/><path class="c" d="M1.500 2.500h3v7h-3z"/><path class="w" d="M1.500 9.500h4l3-2h7v5l-3 3h-11z"/></svg></button><button class="btn tool" aria-label="3D array"><svg><path class="c b" d="M.5 5.500h3v-2l3-3h8v9l-3 5h-11zM4.500 3.500h7v7M8.500 3.500v11M.5 10.500h11M4.500 5.500v9M4.500 7.500h10M11.500 3.500l3-3M10.500.5l-2 3"/></svg></button></div>
<div class="tbar" role="toolbar" aria-label="Zoom"><span class="grip"></span>
<button class="btn tool" aria-label="Zoom window"><svg><path class="w" d="M.5 1.500h13v10h-13z"/><use href="#mag"/></svg></button><button class="btn tool" aria-label="Zoom dynamic"><svg><path d="M.5 4v-3.500h3.500M10 .5h3.500v3.500M.5 8v3.500h3.500" stroke-dasharray="2 1"/><use href="#mag"/></svg></button><button class="btn tool" aria-label="Zoom scale"><svg><path class="c b" d="M.5 1.500h11v9h-11z"/><path class="w b" d="M.5 6.500h5v4h-5z"/><use href="#mag"/></svg></button><button class="btn tool" aria-label="Zoom center"><svg><path class="t" stroke-dasharray="2 1" d="M0 5h10M5 0v10"/><path class="u" d="M4 4h3v3h-3z"/><use href="#mag"/></svg></button><button class="btn tool" aria-label="Zoom object"><svg><path class="w" d="M.5 3.500l3-3h9v9l-3 2h-9z"/><use href="#mag"/></svg></button><span class="sep"></span>
<button class="btn tool" aria-label="Zoom in"><svg><path class="t" d="M0 4h8M4 0v8"/><use href="#mag"/></svg></button><button class="btn tool" aria-label="Zoom out"><svg><path class="t" d="M0 3h8"/><use href="#mag"/></svg></button><span class="sep"></span>
<button class="btn tool" aria-label="Zoom all"><svg><path class="w" d="M1.500.5h7l4 4v9h-11zM8.500.5v4h4"/><use href="#mag"/></svg></button><button class="btn tool" aria-label="Zoom extents"><svg><path d="M1 1l12 10M13 1l-12 10M.5 4v-3.500h3M10 .5h3.500v3.500M.5 8v3.500h3"/><use href="#mag"/></svg></button></div>
</div>
</div>

<!-- draw bar, drawing, modify bar -->
<div class="d-flex flex-fill pt-1" style="gap:4px">
<div class="tbar vert align-self-start" role="toolbar" aria-label="Draw"><span class="grip"></span>
<button class="btn tool" aria-label="Line"><svg><path d="M1.500 14.500l13-13"/><path class="n" d="M.5 13.500h2v2h-2zM13.500.5h2v2h-2z"/></svg></button>
<button class="btn tool" aria-label="Construction line"><svg><path d="M2 14l12-12"/><path class="d" d="M16 0v5l-5-5zM0 16v-5l5 5z"/><path class="n" d="M7.500 7.500h2v2h-2z"/></svg></button>
<button class="btn tool" aria-label="Polyline"><svg><path d="M1.500 12.500h9c6 0 6-8-1-9"/><path class="n" d="M.5 11.500h2v2h-2zM7.500 11.500h2v2h-2zM7.500 2.500h2v2h-2z"/></svg></button>
<button class="btn tool" aria-label="Polygon"><svg><path fill="url(#gr)" d="M8 .5l7.500 6-3 9h-9l-3-9z"/></svg></button>
<button class="btn tool" aria-label="Rectangle"><svg><path fill="url(#gr)" d="M1.500 3.500h13v9h-13z"/><path class="n" d="M.5 11.500h2v2h-2zM13.500 2.500h2v2h-2z"/></svg></button>
<button class="btn tool" aria-label="Arc"><svg><path d="M1.500 14.500c0-7 5-12 13-13"/><path class="n" d="M.5 13.500h2v2h-2zM4.500 5.500h2v2h-2zM13.500.5h2v2h-2z"/></svg></button>
<button class="btn tool" aria-label="Circle"><svg><circle class="w" cx="8" cy="8" r="7"/><path d="M8 8l5-5"/><path class="n" d="M7.500 7.500h2v2h-2z"/></svg></button>
<button class="btn tool" aria-label="Revision cloud"><svg><path fill="url(#gr)" d="M2 8c-3-3-1-8 3-7 2 0 3 1 3 2 2-4 8-2 7 2 0 1-1 2-2 3 4 1 3 7-1 7-2 0-3-1-4-2-2 3-8 1-7-2 0-1 0-2 1-3z"/></svg></button>
<button class="btn tool" aria-label="Spline"><svg><path d="M.5 15c1-9 4-10 7-7s7 2 8-7"/></svg></button>
<button class="btn tool" aria-label="Ellipse"><svg><ellipse class="l" cx="8" cy="8" rx="7" ry="4.500"/><path class="n" d="M.5 7.500h2v2h-2zM13.500 7.500h2v2h-2zM7.500 2.500h2v2h-2z"/></svg></button>
<button class="btn tool" aria-label="Ellipse arc"><svg><path class="l" d="M1.500 8c1-6 14-6 14 0 0 3-3 4-7 4"/><path class="n" d="M.5 7.500h2v2h-2zM7.500 11.500h2v2h-2z"/></svg></button>
<button class="btn tool" aria-label="Insert block"><svg><path class="w" d="M5.500.5h7l3 3v9h-10z"/><path class="l" d="M1.500 6.500h9v6h-9z"/><circle class="w" cx="9.500" cy="11.500" r="3"/><path class="n" d="M.5 11.500h2v2h-2z"/><path class="k" d="M16 12v4h-4z"/></svg></button>
<button class="btn tool" aria-label="Make block"><svg><path class="l" d="M2.500 2.500h10v8h-10z"/><circle class="w" cx="12" cy="10.500" r="3"/><path class="n" d="M1.500 9.500h2v2h-2z"/></svg></button>
<button class="btn tool" aria-label="Point"><svg><path class="n" d="M6.500 6.500h2v2h-2z"/></svg></button>
<button class="btn tool" aria-label="Hatch"><svg><use href="#hatch"/><path opacity=".7" d="M4 10l3 3M4 6l7 7M5 4l8 8M9 4l4 4"/></svg></button>
<button class="btn tool" aria-label="Gradient"><svg><use href="#hatch"/><path fill="#9aa2ae" stroke="none" d="M5 5h6v6h-6z"/></svg></button>
<button class="btn tool" aria-label="Region"><svg><path class="w" d="M.5 2.500h11l4 4v7h-15z"/><circle class="w" cx="7.500" cy="8" r="3"/></svg></button>
<button class="btn tool" aria-label="Table"><svg><path class="w" d="M.5.5h15v15h-15z"/><path opacity=".6" d="M.5 7.500h15M.5 11.500h15M5.500 3v12M10.500 3v12"/><path fill="#8a92a8" d="M.5.5h15v3h-15z"/></svg></button>
<button class="btn tool" aria-label="Multiline text"><svg><text x="2" y="14" font-size="18" font-weight="600" fill="#3a3f46" stroke="none">A</text></svg></button>
<button class="btn tool" aria-label="Add selected"><svg><circle fill="#62a855" stroke="#2c6a28" cx="4" cy="4" r="3.500"/><circle fill="#8fd0f5" stroke="#0a64b4" cx="13" cy="12.500" r="3"/><path stroke="#111" d="M9 4.500h3v3M10.500 6l1.500 2 1.500-2"/></svg></button>
</div>

<div class="flex-fill d-flex flex-column" style="gap:5px">
<div class="view flex-fill d-flex flex-column">
  <div class="flex-fill d-flex">
    <div class="canvas flex-fill">
      <div class="vlabel">[−][SW Isometric][Conceptual]</div>
      <svg class="plan" viewBox="0 0 1268 417" preserveAspectRatio="xMidYMid slice" fill="none">
        <path stroke="#262c37" d="M0-604L1268 127M0-438L1268 293M0-272L1268 459M0 60L1268 791M0 226L1268 957M0 392L1268 1123M0 68L1268-663M0 234L1268-497M0 400L1268-331M0 732L1268 1M0 898L1268 167M0 1064L1268 333"/>
        <path stroke="#333946" d="M0-106L1268 625M0 566L1268-165"/>
        <path stroke="#fff" d="M767 92L845 137L818 153L867 182L747 251L721 237L605 303L678 347L564 412L439 339L490 252Z"/>
      </svg>
      <svg class="cubebox" width="76" height="70"><ellipse cx="38" cy="42" rx="32" ry="20" fill="none" stroke="#474c55" stroke-width="8"/><path fill="#c2c2c4" d="M37 4l20 11-20 10-21-10z"/><path fill="#a9a9ab" d="M16 15l21 10v24l-20-12z"/><path fill="#b4b4b6" d="M57 15l-20 10v24l20-12z"/><path fill="none" stroke="#dedee0" d="M37 4l20 11v22l-20 12-20-12-1-22z"/><path stroke="#77777a" d="M37 25v24"/>
        <g font-family="Liberation Sans" font-weight="700" font-size="7" fill="#55555c"><text transform="translate(20 30) rotate(20)">JFT</text><text transform="translate(38 39) rotate(-26)" font-size="6">FRONT</text><text transform="translate(34 17) rotate(-25)" font-size="8">P</text></g>
        <g font-family="Liberation Sans" font-weight="700" fill="#c9c9cc" font-size="12"><text transform="translate(6 61) rotate(-25)">W</text><text transform="translate(60 56) rotate(28)">S</text><text x="11" y="28" font-size="7">N</text><text x="57" y="28" font-size="7">E</text></g></svg>
      <button class="wcs d-flex justify-content-between align-items-center" aria-label="Unnamed UCS">Unnamed<svg width="9" height="6"><path fill="#a8b0b8" stroke="#80808c" d="M0 0h9l-4.500 5z"/></svg></button>
      <svg class="ucsbox" width="90" height="66" fill="none" stroke-linecap="round"><path stroke="#4ec74e" stroke-width="5" d="M9 43l31 17"/><path stroke="#a8f0a0" d="M9 42l30 16"/><path stroke="#c2504c" stroke-width="5" d="M76 43l-31 18"/><path stroke="#e09a94" stroke-dasharray="2 2" d="M76 43l-31 18"/><path stroke="#3c68b4" stroke-width="5" stroke-linecap="butt" d="M42 22v41"/><path stroke="#6c9ae0" d="M41 23v38"/><path stroke="#a8dcff" stroke-width="3" d="M42 22v1"/><path stroke="#1e70e0" d="M42 5.500h11l-11 11h11"/><path stroke="#2c9a2c" d="M5 26l6 5 6-5M11.500 31v6"/><path stroke="#f03838" d="M74.500 26.500l11 11M85.500 26.500l-11 11"/></svg>
    </div>
    <div class="vs d-flex flex-column align-items-center"><svg class="i"><path stroke-width="2" d="M4 9l4-4 4 4"/></svg><div style="flex:183"></div><div class="thumb"></div><div style="flex:181"></div><svg class="i"><path stroke-width="2" d="M4 7l4 4 4-4"/></svg></div>
  </div>
  <div class="mtabs d-flex">
    <button class="nv" aria-label="First"><svg width="10" height="9"><path fill="#666" d="M1 0h1v9h-1zM9 0v9l-5-4.500z"/></svg></button><button class="nv" aria-label="Previous"><svg width="8" height="9"><path fill="#666" d="M7 0v9l-5-4.500z"/></svg></button><button class="nv" aria-label="Next"><svg width="8" height="9"><path fill="#666" d="M2 0v9l5-4.500z"/></svg></button><button class="nv" aria-label="Last"><svg width="10" height="9"><path fill="#666" d="M8 0h1v9h-1zM1 0v9l5-4.500z"/></svg></button>
    <button class="on">Model</button><button class="lt">Layout1</button><svg class="cut"><path d="M6 0l-6 15"/></svg><button class="lt">Layout2</button><svg class="cut"><path d="M6 0l-6 15"/></svg>
    <div class="ms-auto d-flex align-items-center border-start" style="width:35%"><svg class="i ms-1"><path stroke-width="2" d="M10 4l-4 4 4 4"/></svg><div style="flex:190"></div><div class="thumb" style="height:14px"></div><div style="flex:193"></div><svg class="i" style="margin-right:17px"><path stroke-width="2" d="M6 4l4 4-4 4"/></svg></div>
  </div>
</div>
<div class="d-flex pb-1" style="gap:2px">
<div class="tbar" role="toolbar" aria-label="UCS"><span class="grip"></span>
<button class="btn tool" aria-label="UCS"><svg><use href="#axes"/></svg></button><span class="sep"></span>
<button class="btn tool" aria-label="World"><svg><use href="#axes"/><circle fill="#7fb4d8" cx="9.500" cy="6.500" r="6"/><path fill="#d4ecd8" stroke="none" d="M5 4l4-2 3 2-3 2 2 4-4-2zM12 7l3-1-2 4z"/></svg></button><button class="btn tool" aria-label="UCS previous"><svg><use href="#axes"/><path stroke="#111" stroke-width="1.500" d="M7 6c4-4 9 0 5 5M7 2v4h4"/></svg></button><span class="sep"></span>
<button class="btn tool" aria-label="Face UCS"><svg><use href="#axes"/><path class="c" d="M7.500 4.500l3-3h5v5l-3 3h-5zM12.500 4.500l3-3"/><path class="c b" d="M7.500 4.500h5v5h-5z"/></svg></button><button class="btn tool" aria-label="Object UCS"><svg><use href="#axes"/><path class="c b" d="M7.500 4.500l3-3h6v5l-3 4h-6zM7.500 4.500h6v6M13.500 4.500l3-3"/></svg></button><button class="btn tool" aria-label="View UCS"><svg><use href="#axes"/><path class="c b" d="M6.500 3.500h10v6h-10z"/></svg></button><span class="sep"></span>
<button class="btn tool" aria-label="Origin"><svg><use href="#axes"/><circle class="c b" cx="3.500" cy="14.500" r="1.500"/></svg></button><button class="btn tool" aria-label="Z axis"><svg><use href="#axes"/><text x="10" y="8" font-size="10" font-weight="700" fill="#0a64b4" stroke="none">Z</text></svg></button><button class="btn tool" aria-label="3 point"><svg><use href="#axes"/><text x="9" y="9" font-size="11" font-weight="700" fill="#0a64b4" stroke="none">3</text></svg></button><span class="sep"></span>
<button class="btn tool" aria-label="Rotate X"><svg><path d="M3.500 1v13.500h4M1.500 3l2-2 2 2M4 14l4-5"/><use href="#turn"/><text x="9" y="16" font-size="9" font-weight="700" fill="#0a64b4" stroke="none">X</text></svg></button><button class="btn tool" aria-label="Rotate Y"><svg><path d="M3.500 1v13.500h4M1.500 3l2-2 2 2M4 14l4-5"/><use href="#turn"/><text x="9" y="16" font-size="9" font-weight="700" fill="#0a64b4" stroke="none">Y</text></svg></button><button class="btn tool" aria-label="Rotate Z"><svg><path d="M3.500 1v13.500h4M1.500 3l2-2 2 2M4 14l4-5"/><use href="#turn"/><text x="9" y="16" font-size="9" font-weight="700" fill="#0a64b4" stroke="none">Z</text></svg></button><span class="sep"></span>
<button class="btn tool" aria-label="Apply UCS"><svg><use href="#axes"/><path class="w" d="M6.500.5h9v6h-9zM11 .5v6M6.500 3.500h9"/><path stroke="#111" d="M9 12v-2h4M11 8l2 2-2 2"/></svg></button></div>
<div class="tbar" role="toolbar" aria-label="Visual styles"><span class="grip"></span>
<button class="btn tool" aria-label="2D wireframe"><svg><path d="M.5.5h10v10h-10z"/><circle cx="10.500" cy="10.500" r="5"/></svg></button><span class="sep"></span>
<button class="btn tool" aria-label="Wireframe"><svg><circle class="w" cx="8" cy="8" r="7.500"/><path d="M2 3l12 10M14 3l-12 10M1 6c4 5 10 5 14 0M1 10c4-5 10-5 14 0"/></svg></button><button class="btn tool" aria-label="Hidden"><svg><circle class="w" cx="8" cy="8" r="7.500"/><path d="M2 4c2 4 4 6 6 7 3-1 5-3 6-7M8 11c-2 1-3 2-4 3M8 11c2 1 4 2 5 2"/></svg></button><button class="btn tool" aria-label="Realistic"><svg><circle fill="url(#bl)" stroke="none" cx="8" cy="8" r="7"/></svg></button><button class="btn tool" aria-label="Conceptual"><svg><circle fill="url(#re)" stroke="none" cx="8" cy="8" r="7"/></svg></button><span class="sep"></span>
<button class="btn tool" aria-label="Manage visual styles"><svg><circle fill="url(#gr)" cx="7.500" cy="7.500" r="7"/><path d="M3 12l5-11"/><use href="#list"/></svg></button></div>
</div>
</div>

<div class="d-flex flex-column" style="gap:1px">
<div class="tbar vert" role="toolbar" aria-label="Modify"><span class="grip"></span>
<button class="btn tool" aria-label="Erase"><svg><path d="M0 15.500h16"/><path fill="#f3d9a0" stroke="#9a6a20" d="M6 8l8-8 2 2-8 9z"/><path fill="#d4523a" stroke="#7a2a1a" d="M3 11l3-3 3 3-3 3c-3 0-3-1-3-3z"/></svg></button>
<button class="btn tool" aria-label="Copy"><svg><circle class="w" cx="3.500" cy="3.500" r="3"/><circle class="c b" cx="10" cy="10" r="3.500"/><circle class="c b" cx="12" cy="12" r="3.500"/><path stroke="#111" d="M9 2.500h5v3M12 4l2 2 2-2"/></svg></button>
<button class="btn tool" aria-label="Mirror"><svg><path class="w" d="M5.500 3.500v10h-5z"/><path class="c b" d="M10.500 3.500v10h5z"/><path stroke="#111" d="M8 0v16"/></svg></button>
<button class="btn tool" aria-label="Offset"><svg><path stroke="#111" d="M16 14.500h-12c-4 0-4-5 0-5h1v-3c0-6 8-6 8 0v3h3"/><path class="b" d="M16 12h-11M7.500 12v-5c0-3 4-3 4 0v3M12 10h4"/></svg></button>
<button class="btn tool" aria-label="Array"><svg><path class="w" d="M.5.5h6v6h-6z"/><path class="c b" d="M9.500.5h6v6h-6zM.5 9.500h6v6h-6zM9.500 15.500v-6h6"/><path class="k" d="M16 11v5h-5z"/></svg></button>
<button class="btn tool" aria-label="Move"><svg><path class="d" d="M8 0l3 4h-2v2h-2v-2h-2zM8 16l3-4h-2v-2h-2v2h-2zM0 8l4-3v2h2v2h-2v2zM16 8l-4-3v2h-2v2h2v2z"/><path class="n" d="M6.500 6.500h3v3h-3z"/></svg></button>
<button class="btn tool" aria-label="Rotate"><svg><path stroke-width="1.500" d="M11 2c6 4 4 13-3 13-9 0-9-11-1-12"/><path class="d" d="M5 0l5 3-5 3z"/></svg></button>
<button class="btn tool" aria-label="Scale"><svg><path class="c b" d="M.5.5h15v15h-15z"/><path class="w" d="M.5 7.500h8v8h-8z"/></svg></button>
<button class="btn tool" aria-label="Stretch"><svg><path class="w" d="M.5.5h7v15h-7z"/><path class="c b" d="M8.500.5h3l4 15h-7"/><path stroke="#111" d="M4 11.500h6M8 9.500l2 2-2 2"/></svg></button>
<button class="btn tool" aria-label="Trim"><svg><path stroke="#111" d="M0 8.500h5"/><path class="b" d="M3 14l6-12"/><path class="b da" d="M8 8.500h8"/></svg></button>
<button class="btn tool" aria-label="Extend"><svg><path stroke="#111" d="M0 8.500h5"/><path class="b da" d="M6 8.500h5"/><path class="b" d="M10 14l6-12"/></svg></button>
<button class="btn tool" aria-label="Break at point"><svg><path class="w" stroke="none" d="M1 4h15v9h-15z"/><path d="M16 3.500h-15.500v10h16"/><path class="u" d="M11 2h3v3h-3z"/></svg></button>
<button class="btn tool" aria-label="Break"><svg><path class="w" d="M3 3.500h-2.500v10h15v-10h-2.500"/><path class="u" d="M3 2h3v3h-3zM10 2h3v3h-3z"/></svg></button>
<button class="btn tool" aria-label="Join"><svg><path d="M1 8.500h14"/><path class="u" d="M5 5.500l3 3-3 3zM11 5.500l-3 3 3 3z"/></svg></button>
<button class="btn tool" aria-label="Chamfer"><svg><path class="w" d="M.5 9v6.500h15v-15h-7z"/><path class="b" d="M.5 9l8-8.500"/></svg></button>
<button class="btn tool" aria-label="Fillet"><svg><path class="w" d="M.5 11v4.500h15v-15h-4c-6 0-11 5-11 10"/><path class="b" d="M.5 11c0-6 5-10.500 11-10.500"/></svg></button>
<button class="btn tool" aria-label="Blend curves"><svg><path stroke="#5aa8e8" stroke-width="1.500" d="M2 9c2-6 5-6 7-2s4 5 6-1"/><path class="n" d="M.5 8.500h2v2h-2zM13.500 5.500h2v2h-2z"/><path d="M.5 15l1-4M14.500 5l1-4"/></svg></button>
<button class="btn tool" aria-label="Explode"><svg><path class="c b" d="M.5 7.500l3-3v6l-3 4zM5.500 3.500l3-2h4l-2 2zM12.500 6.500l3-3v6l-3 3zM3.500 6.500h8v8h-8z"/></svg></button>
</div>
<div class="tbar vert border-bottom-0" role="toolbar" aria-label="Draw order"><span class="grip"></span>
<button class="btn tool" aria-label="Bring to front"><svg><path class="w" d="M.5.5h10v7h-10zM6.500 9.500h9v6h-9z"/><path fill="#b4bcc8" d="M3.500 4.500h9v7h-9z"/></svg></button>
<button class="btn tool" aria-label="Send to back"><svg><path fill="#b4bcc8" d="M3.500 4.500h9v7h-9z"/><path class="w" d="M.5.5h10v6h-10zM5.500 9.500h10v6h-10z"/></svg></button>
<button class="btn tool align-items-start overflow-hidden" style="height:8px" aria-label="Bring above"><svg class="mt-1"><path class="w" d="M.5.5h11v7h-11z"/></svg></button>
</div>
</div>
</div>
</main>

<section class="cmd d-flex">
  <div class="cmdside d-flex flex-column align-items-center justify-content-between pb-1"><span class="grip align-self-center" style="width:19px;height:8px;border-width:1px;background-color:#757575;border-color:#757575"></span><button class="flat" style="height:18px" aria-label="Close command line"><svg><path stroke="#fff" stroke-width="2" d="M4 4l8 8M12 4l-8 8"/></svg></button><button class="flat" style="height:18px" aria-label="Customize"><svg><path stroke="#fff" stroke-width="3" d="M6 6l8 8"/><path stroke="#fff" stroke-width="2" d="M2 5c1 3 5 3 5 0 0-1 0-3-2-4"/></svg></button></div>
  <div class="flex-fill"><div class="cmdlog"><div>Command:</div><div>Command: _-view Enter an option [?/Delete/Orthographic/Restore/Save/sEttings/Window]: _swiso</div></div>
  <div class="cmdin d-flex align-items-center"><svg class="i"><path fill="#d5dbe0" stroke="#8a929a" d="M.5 1.500h14v13h-14z"/><path stroke="#222" d="M3 5l4 3-4 3M8 11.500h5"/></svg><svg class="i" style="width:12px"><path fill="#777" stroke="none" d="M2 6h6l-3 4z"/></svg><input type="text" placeholder="Type a command" aria-label="Command"></div></div>
</section>

<footer class="status d-flex">
<div class="coords">3709.5896, 1316.7377, 0.0000</div>
<button style="width:37px">INFER</button><button style="width:35px">SNAP</button><button class="act" style="width:33px">GRID</button><button class="act" style="width:45px">ORTHO</button><button style="width:42px">POLAR</button><button class="act" style="width:43px">OSNAP</button><button style="width:57px">3DOSNAP</button><button class="act" style="width:50px">OTRACK</button><button class="act" style="width:36px">DUCS</button><button class="act" style="width:30px">DYN</button><button style="width:30px">LWT</button><button class="act" style="width:27px">TPY</button><button style="width:21px">QP</button><button style="width:20px">SC</button><button style="width:22px">AM</button>
<div class="ms-auto d-flex border-start border-secondary"><button style="width:44px">MODEL</button>
<button style="width:22px" aria-label="Layout"><svg class="i"><path class="w" d="M2.500 1.500h11v10h-11z"/><path d="M6.500 4.500v5h4zM0 14.500h16"/></svg></button><button style="width:22px" aria-label="Quick view"><svg class="i"><path class="w" d="M.5 2.500h7v7h-7zM8.500 2.500h7v7h-7z"/><path class="t" d="M0 13h16"/></svg></button><span class="gap"></span>
<button style="width:51px"><svg class="i"><path class="w" d="M8 1l2 7 5 5-5-1-2-3-2 3-5 1 5-5z"/></svg><span class="ms-1">1:1</span><svg class="i" style="width:14px"><path class="k" d="M3 5h8l-4 4z"/></svg></button><button style="width:22px" aria-label="Annotation visibility"><svg class="i"><path class="w" d="M7 1l2 7 5 5-5-1-2-3-2 3-5 1 5-5z"/><circle class="or" cx="13" cy="8" r="3"/><path class="w" d="M12 11h2v4h-2z"/></svg></button><button style="width:22px" aria-label="Auto scale"><svg class="i" opacity=".5"><path class="w" d="M8 1l2 7 5 5-5-1-2-3-2 3-5 1 5-5z"/></svg></button><span class="gap" style="width:6px"></span>
<button style="width:22px" aria-label="Workspace switching"><svg class="i"><use href="#gear"/><path class="k" d="M16 12v4h-4z"/></svg></button><button style="width:22px" aria-label="Lock"><svg class="i"><path class="w" d="M.5 6.500h9v8h-9z"/><path d="M8.500 7v-2c0-5 7-5 7 0v2M5 9v3"/></svg></button><button style="width:22px" aria-label="Performance"><svg class="i"><circle fill="#808890" stroke="#999" cx="8" cy="8" r="6"/><path stroke="#ddd" stroke-width="2" d="M5 5l3 3 3-3"/></svg></button>
<button style="width:36px;background:#858585" aria-label="Isolate objects"><span class="px-1 border border-secondary bg-body-secondary bg-opacity-50"><svg class="i"><use href="#bulb"/></svg></span></button><button style="width:11px" aria-label="Isolate menu"><svg class="i" style="width:8px"><path class="k" d="M1 7h6l-3 4z"/></svg></button><button style="width:22px" aria-label="Clean screen"><svg class="i"><path class="w" d="M1.500 2.500h13v12h-13z"/><path class="d" d="M1 2h14v3h-14z"/></svg></button>
<span class="ps-1"><svg width="12" height="21"><path stroke="#ddd" stroke-width="2" stroke-dasharray="2 2" d="M0 19h12M4 15h8M8 11h4"/></svg></span></div>
</footer>
</div>
<script src="https://cdn.jsdelivr.net/npm/bootstrap@5.3.0/dist/js/bootstrap.bundle.min.js"></script>
</body>
</html>
